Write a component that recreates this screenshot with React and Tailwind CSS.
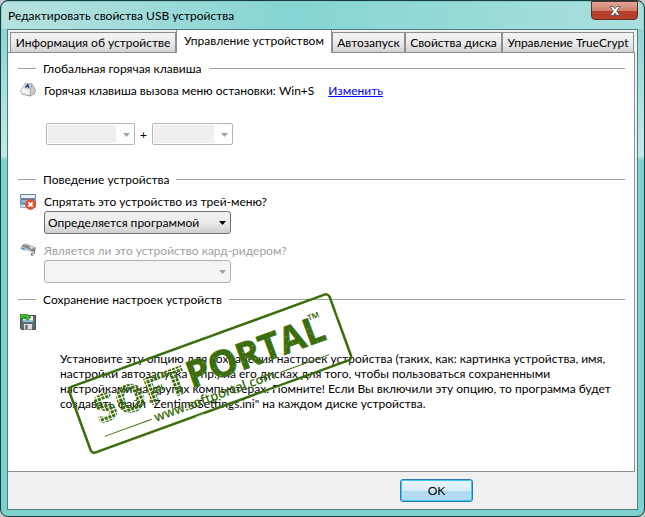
import React from "react";

const tabs = [
  { label: "Информация об устройстве", width: "w-[166px]" },
  { label: "Управление устройством", active: true, width: "w-[156px]" },
  { label: "Автозапуск", width: "w-[73px]" },
  { label: "Свойства диска", width: "w-[97px]" },
  { label: "Управление TrueCrypt", width: "w-[132px]" },
];

function SectionTitle({ children }) {
  return (
    <h2 className="flex h-4 items-center gap-[7px] whitespace-nowrap">
      <span className="h-px w-[18px] bg-[#a0a0a0]" />
      {children}
      <span className="h-px flex-1 bg-[#a0a0a0]" />
    </h2>
  );
}

function Arrow({ className }) {
  return (
    <svg viewBox="0 0 7 4" className={`pointer-events-none absolute h-1 w-[7px] ${className}`} aria-hidden="true">
      <path d="M0 0h7L3.500 4z" fill="currentColor" />
    </svg>
  );
}

function HotkeySelect({ label, width }) {
  return (
    <div className={`relative flex h-[22px] items-stretch rounded-xs border border-[#b5b5b5] bg-white p-px pr-[18px] ${width}`}>
      <select disabled aria-label={label} className="w-full appearance-none bg-[#efefef]">
        <option></option>
      </select>
      <Arrow className="right-1 top-[9px] text-[#a3a3a3]" />
    </div>
  );
}

function KeyIcon() {
  return (
    <svg viewBox="0 0 16 16" className="h-4 w-4" aria-hidden="true">
      <path d="M5 1 12 1.500 15.800 7.500 15 12 10 14.500 2 12.500 .2 9z" fill="#8b8b8b" />
      <path d="M5 1.500 11.500 2 10 8.500 9.500 13.500 2.300 11.700 .8 9z" fill="#eceeef" />
      <path d="M5.500 1.500 11.500 2 10.300 7.500 3.500 6z" fill="#b9c8d8" />
      <path d="m12 2.500 3.200 5-.7 4-4.200 2.200.2-5z" fill="#cbcbcb" />
      <path d="m5.500 5.500 2.300-3 .9 3.700M6.500 4.500h2" stroke="#17456f" strokeWidth="1.200" fill="none" />
      <path d="m1.500 9 8.200 1.500" stroke="#fff" />
    </svg>
  );
}

function HideIcon() {
  return (
    <svg viewBox="0 0 16 16" className="h-4 w-4" aria-hidden="true">
      <path d="M.5.5h15v4H.5z" fill="#e9f0f8" stroke="#6b83ad" />
      <path d="M.5 5.500h15v4H.5z" fill="#8fb2db" stroke="#5f7fae" />
      <path d="M.5 10.500h15v3H.5z" fill="#c9dcf0" stroke="#9ab2d0" />
      <circle cx="10.500" cy="10.500" r="5" fill="#ed4f1c" stroke="#c44a22" strokeWidth=".7" />
      <path d="m8.300 8.300 4.400 4.400m0-4.400-4.400 4.400" stroke="#fff" strokeWidth="1.900" />
    </svg>
  );
}

function ReaderIcon() {
  return (
    <svg viewBox="0 0 16 16" className="h-4 w-4" aria-hidden="true">
      <path d="M3 1.500 6 .5l9.500 4v3L12 9 .5 4.500z" fill="#7b8186" />
      <path d="m4 1.700 2-.7 8.500 3.700-3 1.300z" fill="#dde1e3" />
      <path d="m.5 4.500 1.500-1.500 9.500 4v2z" fill="#b4babd" />
      <path d="m0 5 3 2 3 .5-3-2.500z" fill="#4a9bd1" />
      <path d="m6 2.500 4 1.700" stroke="#555c60" />
      <path d="M14.500 7.500v2.500l-3 .5v1.500l2 .5" fill="none" stroke="#777" strokeWidth="1.200" />
    </svg>
  );
}

function SaveIcon() {
  return (
    <svg viewBox="0 0 16 16" className="h-4 w-4" aria-hidden="true">
      <path d="M.5 1.500h15v14h-14l-1-1z" fill="#626b72" stroke="#454b50" />
      <path d="M3 2h10v6H3z" fill="#e3f1f6" />
      <path d="M3 6h10v2H3z" fill="#8fc5dc" />
      <path d="M4 10h8v5.500H4z" fill="#dedede" />
      <path d="M5.500 11h2v4h-2z" fill="#4e565c" />
      <path d="M0 0h5c3 0 4 1.500 4 3h2L7.500 6.500 4 3.500h2C6 2.300 4 2 3.500 2.500L5 4 0 5z" fill="#43bd32" stroke="#147514" strokeWidth=".8" />
    </svg>
  );
}

function Stamp() {
  return (
    <svg viewBox="0 0 296 172" className="pointer-events-none absolute left-[53px] top-[234px] h-[172px] w-[296px]" role="img" aria-label="SOFTPORTAL">
      <defs>
        <pattern id="dots" width="4" height="4" patternUnits="userSpaceOnUse">
          <path d="M0 0h3v3H0z" fill="#3a6e0c" />
        </pattern>
        <pattern id="worn" width="23" height="19" patternUnits="userSpaceOnUse">
          <path d="M0 0h23v19H0z" fill="#3a6e0c" />
          <path d="M3 4h1v1H3zM9 2h1v1H9zM15 7h1v1h-1zM6 12h1v1H6zM19 15h1v1h-1zM12 16h1v1h-1zM20 3h1v1h-1zM10 9h1v1h-1zM2 17h1v1H2zM16 12h1v1h-1z" fill="#a9c48f" />
        </pattern>
      </defs>
      <g transform="translate(7 101) rotate(-20)" fontFamily="'Open Sans', sans-serif" fill="#3a6e0c">
        <rect width="277" height="70" rx="4" fill="none" stroke="#3a6e0c" strokeWidth="2.500" />
        <path d="M40-1.500h18M146-1.500h9M190 71.500h20M110 71h9M278.500 20v9" stroke="#d5e2c8" strokeWidth=".8" />
        <text x="17" y="45" fontSize="39" fontWeight="800" fill="url(#dots)">SOFT</text>
        <text x="116" y="43" fontSize="37" fontWeight="700" fill="url(#worn)" stroke="#3a6e0c" strokeWidth=".7">PORTAL</text>
        <text x="249" y="25" fontSize="16" fontWeight="700">™</text>
        <text x="71" y="62" fontSize="13" fontWeight="600">www.softportal.com</text>
        <path d="M18 58h50M206 58h51" stroke="#3a6e0c" />
      </g>
    </svg>
  );
}

export default function App() {
  return (
    <div className="min-h-screen bg-[#c9c9c9] font-['Lato','Noto_Sans',sans-serif] text-[12px] leading-[15px] text-black">
      <div className="flex min-h-screen flex-col rounded-lg border border-[#1d3a3c] bg-linear-to-b from-[#7fd0cf] via-[#c4eae7] via-30% to-[#7dd1ce] to-31% p-px">
        <header className="flex h-[27px] items-start justify-between rounded-t-md bg-linear-to-r from-[#b7e2df] via-[#84d5d3] via-45% to-[#a9e0dd] pl-1.5 pr-[5px]">
          <h1 className="pt-1.5">Редактировать свойства USB устройства</h1>
          <button aria-label="Закрыть" className="-mt-px flex h-[19px] w-[47px] items-center justify-center rounded-b-[4px] border border-[#5c2d2b] bg-linear-to-b from-[#e3a596] via-[#d0816e] via-50% to-[#b8402a] to-51%">
            <svg viewBox="0 0 12 10" className="h-2.5 w-3" aria-hidden="true">
              <path d="M1 .5h3l2 2.300L8 .5h3L7.700 5 11 9.500H8L6 7.200 4 9.500H1L4.300 5z" fill="#fff" stroke="#555a66" strokeWidth=".9" />
            </svg>
          </button>
        </header>

        <div className="mx-[5px] mb-[5px] flex flex-1 flex-col border border-[#4d7f7e] bg-[#f0f0f0]">
          <div role="tablist" className="flex h-[22px] items-end pl-[2px]">
            {tabs.map((t) =>
              t.active ? (
                <button key={t.label} role="tab" aria-selected="true" className={`relative z-10 -mb-px h-[23px] whitespace-nowrap border-x border-[#8c8e94] bg-white pb-0.5 ${t.width}`}>
                  {t.label}
                </button>
              ) : (
                <button key={t.label} role="tab" aria-selected="false" className={`h-5 whitespace-nowrap border border-b-0 border-[#8c8e94] bg-linear-to-b from-[#f3f3f3] via-[#ebebeb] via-50% to-[#d2d2d2] ${t.width}`}>
                  {t.label}
                </button>
              ),
            )}
          </div>

          <main role="tabpanel" className="relative mr-0.5 flex flex-1 flex-col border border-l-0 border-[#8c8e94] bg-white pb-12 pl-2.5 pr-[9px] pt-[7px]">
            <SectionTitle>Глобальная горячая клавиша</SectionTitle>
            <div className="mt-1.5 flex h-4 items-center pl-0.5">
              <KeyIcon />
              <span className="ml-2">Горячая клавиша вызова меню остановки: Win+S</span>
              <a href="#hotkey" className="ml-3.5 text-[#0000ff] underline">Изменить</a>
            </div>
            <div className="mt-[25px] flex items-center gap-1 pl-7">
              <HotkeySelect label="Модификатор" width="w-[89px]" />
              <span className="w-[9px] text-center">+</span>
              <HotkeySelect label="Клавиша" width="w-[81px]" />
            </div>

            <div className="mt-[26px]">
              <SectionTitle>Поведение устройства</SectionTitle>
            </div>
            <div className="mt-[7px] flex gap-2 pl-0.5">
              <IconSlot><HideIcon /></IconSlot>
              <div className="flex flex-col">
                <label htmlFor="hide" className="h-[17px] whitespace-nowrap">Спрятать это устройство из трей-меню?</label>
                <div className="relative w-[187px]">
                  <select id="hide" className="block h-[23px] w-full appearance-none rounded-[3px] border border-[#707070] bg-linear-to-b from-[#f2f2f2] via-[#ebebeb] via-50% to-[#cfcfcf] px-[3px]">
                    <option>Определяется программой</option>
                  </select>
                  <Arrow className="right-[5px] top-[10px] text-black" />
                </div>
              </div>
            </div>
            <div className="mt-[9px] flex gap-2 pl-0.5">
              <IconSlot><ReaderIcon /></IconSlot>
              <div className="flex flex-col">
                <label htmlFor="reader" className="h-[17px] whitespace-nowrap text-[#a0a0a0]">Является ли это устройство кард-ридером?</label>
                <div className="relative w-[187px]">
                  <select id="reader" disabled className="block h-[23px] w-full appearance-none rounded-[3px] border border-[#adb2b5] bg-[#f4f4f4]">
                    <option></option>
                  </select>
                  <Arrow className="right-[5px] top-[10px] text-[#a3a3a3]" />
                </div>
              </div>
            </div>

            <div className="mt-2">
              <SectionTitle>Сохранение настроек устройств</SectionTitle>
            </div>
            <div className="mt-[7px] pl-0.5">
              <SaveIcon />
            </div>
            <p className="mt-[21px] whitespace-nowrap pl-[42px]">
              Установите эту опцию для сохранения настроек устройства (таких, как: картинка устройства, имя,<br />
              настройки автозапуска и пр.) на его дисках для того, чтобы пользоваться сохраненными<br />
              настройками на других компьютерах. Помните! Если Вы включили эту опцию, то программа будет<br />
              создавать файл "ZentimoSettings.ini" на каждом диске устройства.
            </p>
            <Stamp />
          </main>

          <footer className="flex h-[37px] items-center justify-center pl-[228px]">
            <button className="h-[23px] w-[73px] rounded-[3px] border border-[#2f7ba8] bg-linear-to-b from-[#e9f5fc] via-[#d7edf9] via-50% to-[#b3dcf3] to-51% shadow-[inset_0_0_0_1px_#3fc8f5]">
              OK
            </button>
          </footer>
        </div>
      </div>
    </div>
  );
}

function IconSlot({ children }) {
  return <div className="h-4 w-4 shrink-0">{children}</div>;
}
